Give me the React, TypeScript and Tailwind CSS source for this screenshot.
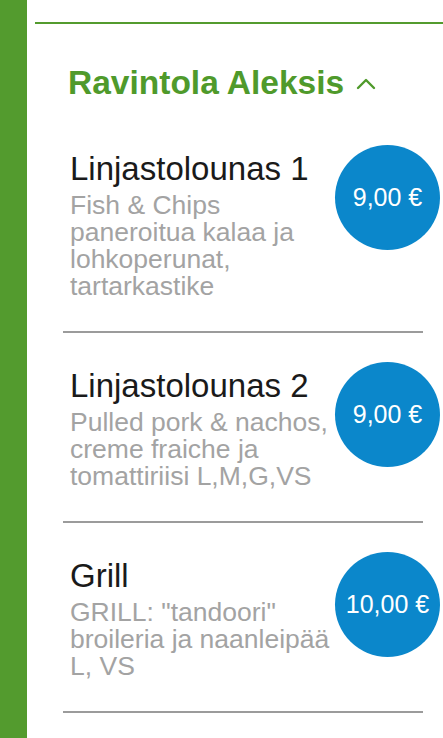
import React from 'react';

const items = [
  {
    title: 'Linjastolounas 1',
    desc: 'Fish & Chips paneroitua kalaa ja lohkoperunat, tartarkastike',
    price: '9,00 €',
  },
  {
    title: 'Linjastolounas 2',
    desc: 'Pulled pork & nachos, creme fraiche ja tomattiriisi L,M,G,VS',
    price: '9,00 €',
  },
  {
    title: 'Grill',
    desc: 'GRILL: "tandoori" broileria ja naanleipää L, VS',
    price: '10,00 €',
  },
];

export default function App() {
  return (
    <div className="min-h-screen flex bg-white font-['Liberation_Sans',Arial,sans-serif]">
      {/* side bar */}
      <div className="w-[27px] shrink-0 bg-[#539b2e]" />

      <div className="flex-1 pl-[8px]">
        <div className="mt-[22px] h-[2px] bg-[#539b2e]" />

        <div className="pl-[28px]">
          <h2 className="mt-[39px] mb-[13px] pl-[5px] flex items-center text-[33.5px] leading-[40px] font-bold text-[#4f9a2b]">
            Ravintola Aleksis
            <svg className="ml-[12px] mt-[2px]" width="20" height="12" viewBox="0 0 20 12" fill="none">
              <polyline points="2,10 10,2 18,10" stroke="#4f9a2b" strokeWidth="2.4" strokeLinecap="round" strokeLinejoin="round" />
            </svg>
          </h2>

          {items.map((item) => (
            <div key={item.title}>
              <div className="flex items-start pl-[7px] pr-[3px] pt-[29px] pb-[31px]">
                <div className="flex-1 pt-[6px] pr-[3px]">
                  <h3 className="text-[33px] leading-[36px] mb-[5px] text-[#1a1a1a]">{item.title}</h3>
                  <p className="text-[26.5px] leading-[27px] text-[#a3a3a3]">{item.desc}</p>
                </div>
                <div className="w-[105px] h-[105px] shrink-0 rounded-full bg-[#0b87cb] flex items-center justify-center text-white text-[25px]">
                  {item.price}
                </div>
              </div>
              <div className="h-[2px] mr-[20px] bg-[#9b9b9b]" />
            </div>
          ))}
        </div>
      </div>
    </div>
  );
}
